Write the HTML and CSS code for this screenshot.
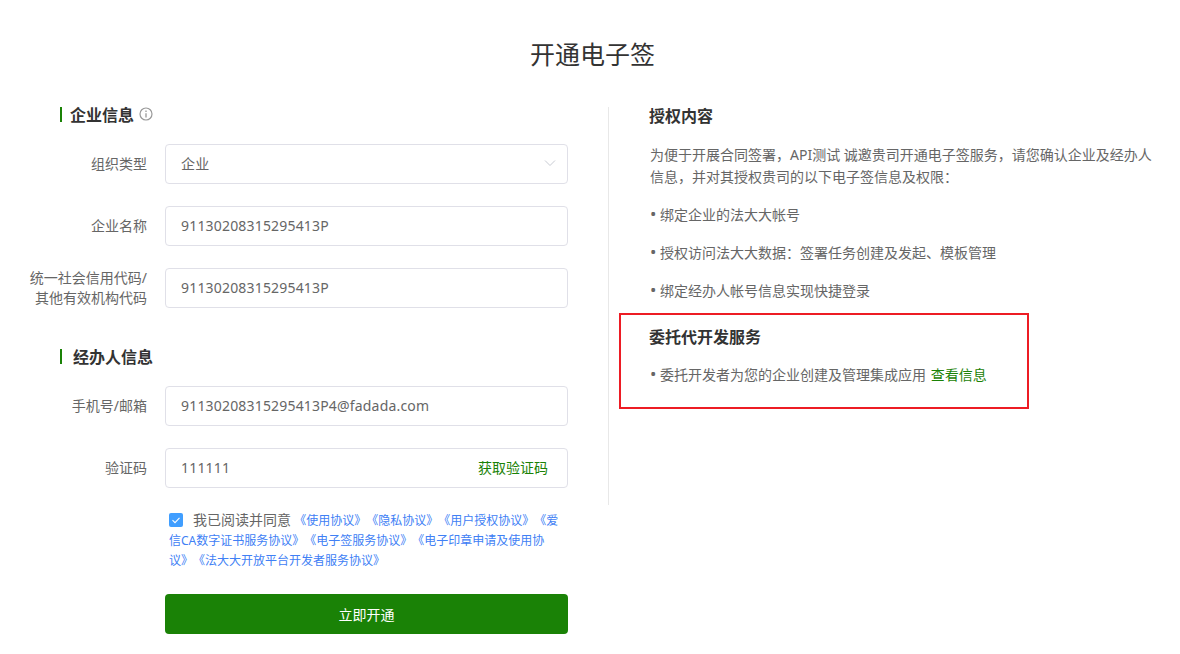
FILE: index.html
```html
<!DOCTYPE html>
<html lang="zh-CN">
<head>
<meta charset="utf-8">
<title>开通电子签</title>
<link rel="stylesheet" href="styles.css">
</head>
<body>
<main class="page">
  <h1 class="title">开通电子签</h1>
  <div class="columns">
    <form class="form">
      <h2 class="section-title"><span class="bar"></span>企业信息
        <svg class="info" width="14" height="14" viewBox="0 0 14 14"><circle cx="7" cy="7" r="6" fill="none" stroke="#999" stroke-width="1.2"/><path d="M7 6.2v4.2M7 3.6v1.4" stroke="#999" stroke-width="1.3" fill="none"/></svg>
      </h2>
      <div class="row">
        <label class="label">组织类型</label>
        <div class="field"><span>企业</span>
          <svg class="chevron" width="12" height="8" viewBox="0 0 12 8"><path d="M1 1.5l5 5 5-5" fill="none" stroke="#c8cbd3" stroke-width="1"/></svg>
        </div>
      </div>
      <div class="row">
        <label class="label">企业名称</label>
        <div class="field"><span>91130208315295413P</span></div>
      </div>
      <div class="row">
        <label class="label label-two">统一社会信用代码/<br>其他有效机构代码</label>
        <div class="field"><span>91130208315295413P</span></div>
      </div>
      <h2 class="section-title section-second"><span class="bar"></span>经办人信息</h2>
      <div class="row">
        <label class="label">手机号/邮箱</label>
        <div class="field"><span>91130208315295413P4@fadada.com</span></div>
      </div>
      <div class="row">
        <label class="label">验证码</label>
        <div class="field"><span>111111</span><a class="code-link">获取验证码</a></div>
      </div>
      <div class="agree">
        <span class="check"><svg width="14" height="14" viewBox="0 0 14 14"><path d="M3.5 7.2l2.5 2.4 4.5-4.8" fill="none" stroke="#fff" stroke-width="1.1"/></svg></span><span class="agree-text">我已阅读并同意</span>
        <a class="doc">《使用协议》《隐私协议》《用户授权协议》《爱信CA数字证书服务协议》《电子签服务协议》《电子印章申请及使用协议》《法大大开放平台开发者服务协议》</a>
      </div>
      <button type="button" class="submit">立即开通</button>
    </form>
    <aside class="side">
      <h3 class="side-title">授权内容</h3>
      <p class="side-text">为便于开展合同签署，API测试 诚邀贵司开通电子签服务，请您确认企业及经办人信息，并对其授权贵司的以下电子签信息及权限：</p>
      <p class="side-item"><span class="dot">•</span>绑定企业的法大大帐号</p>
      <p class="side-item"><span class="dot">•</span>授权访问法大大数据：签署任务创建及发起、模板管理</p>
      <p class="side-item"><span class="dot">•</span>绑定经办人帐号信息实现快捷登录</p>
      <section class="entrust">
        <h3 class="side-title">委托代开发服务</h3>
        <p class="side-item"><span class="dot">•</span>委托开发者为您的企业创建及管理集成应用 <a class="view-link">查看信息</a></p>
      </section>
    </aside>
  </div>
</main>
</body>
</html>
```
FILE: styles.css
```css
* { box-sizing: border-box; }
html, body { margin: 0; padding: 0; background: #fff; }
body {
  width: 1180px;
  height: 654px;
  overflow: hidden;
  font-family: "Noto Sans", "Noto Sans CJK SC", sans-serif;
  font-size: 14px;
  color: #666;
  text-spacing-trim: space-all;
}
.page { padding-top: 35px; }
.title {
  margin: 0;
  height: 36px;
  padding-left: 5px;
  line-height: 36px;
  text-align: center;
  font-family: "Noto Sans CJK SC", sans-serif;
  font-size: 25px;
  font-weight: 400;
  color: #333;
}
.columns {
  display: flex;
  align-items: flex-start;
  margin-top: 35px;
}
.form {
  width: 608px;
  flex: none;
  padding-left: 28px;
}
.section-title {
  display: flex;
  align-items: center;
  margin: 0 0 22px 32px;
  height: 16px;
  font-family: "Noto Sans CJK SC", sans-serif;
  font-size: 16px;
  line-height: 16px;
  font-weight: 700;
  color: #333;
}
.bar {
  width: 2px;
  height: 15px;
  background: #1a8206;
  margin-right: 8px;
}
.info { margin-left: 5px; }
.section-second { margin-top: 40px; margin-bottom: 22px; }
.section-second .bar { margin-right: 11px; }
.row {
  display: flex;
  align-items: center;
  height: 40px;
  margin-bottom: 22px;
}
.label {
  width: 119px;
  flex: none;
  text-align: right;
  line-height: 20px;
  color: #666;
}
.label-two { white-space: nowrap; }
.field {
  display: flex;
  align-items: center;
  justify-content: space-between;
  width: 403px;
  height: 40px;
  margin-left: 18px;
  padding: 0 19px 2px 15px;
  border: 1px solid #e0e0e8;
  border-radius: 4px;
  background: #fff;
  color: #666;
  letter-spacing: 0.18px;
}
.chevron { margin-right: -8px; }
.code-link { color: #1a8206; letter-spacing: 0; }
.agree {
  width: 403px;
  margin: 0 0 0 137px;
  padding-left: 4px;
  height: 60px;
  font-size: 12px;
  line-height: 20px;
}
.check {
  display: inline-flex;
  width: 14px;
  height: 14px;
  border-radius: 2px;
  background: #409eff;
  vertical-align: -2px;
  margin-right: 10px;
}
.agree-text { color: #666; font-size: 14px; }
.doc { color: #4080f5; }
.submit {
  display: block;
  width: 403px;
  height: 40px;
  margin: 24px 0 0 137px;
  border: 0;
  border-radius: 4px;
  background: #1a8206;
  color: #fff;
  font-family: inherit;
  font-size: 14px;
}
.side {
  width: 548px;
  height: 398px;
  flex: none;
  margin-top: 1px;
  padding: 0 0 0 40px;
  border-left: 1px solid #e8e8e8;
}
.side-title {
  margin: -1px 0 0;
  height: 18px;
  line-height: 18px;
  font-family: "Noto Sans CJK SC", sans-serif;
  font-size: 16px;
  font-weight: 700;
  color: #333;
}
.side-text {
  margin: 20px 0 0;
  padding-left: 1px;
  width: 506px;
  line-height: 22px;
}
.side-item {
  margin: 16px 0 0;
  line-height: 22px;
}
.dot {
  display: inline-block;
  width: 11px;
  padding-left: 1px;
  font-size: 17px;
  line-height: 0;
}
.entrust {
  width: 410px;
  height: 96px;
  margin: 11px 0 0 -30px;
  padding: 12px 0 0 28px;
  border: 2px solid #ed1c24;
}
.entrust .side-title { margin-top: 0; }
.entrust .side-item { margin-top: 19px; }
.view-link { color: #1a8206; margin-left: 1px; }
```
